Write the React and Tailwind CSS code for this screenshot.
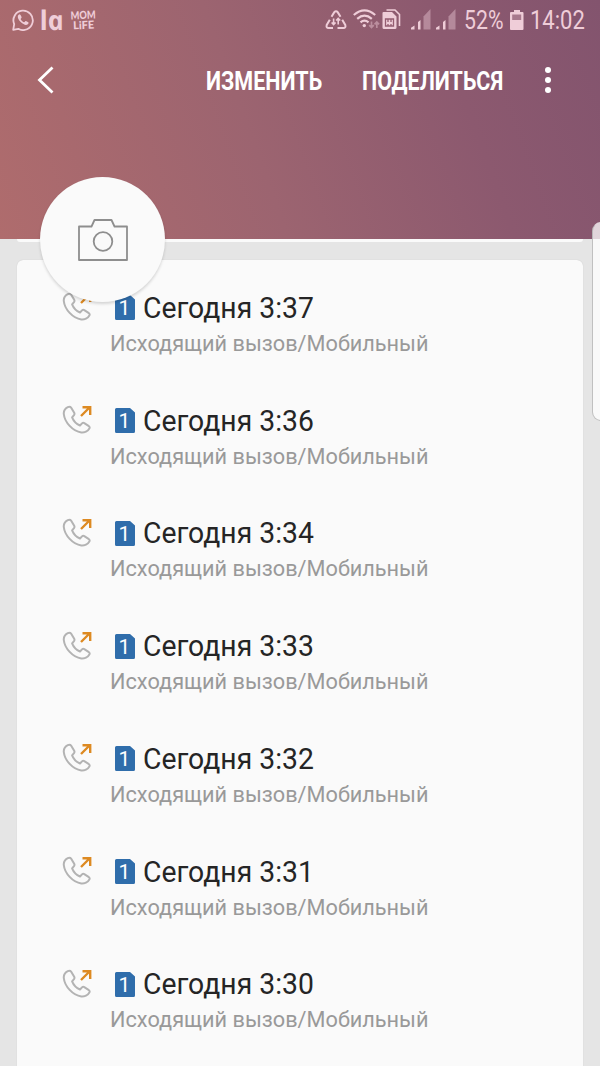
import React from "react";

const calls = [
  { id: 1, time: "Сегодня 3:37" },
  { id: 2, time: "Сегодня 3:36" },
  { id: 3, time: "Сегодня 3:34" },
  { id: 4, time: "Сегодня 3:33" },
  { id: 5, time: "Сегодня 3:32" },
  { id: 6, time: "Сегодня 3:31" },
  { id: 7, time: "Сегодня 3:30" },
];

function WhatsAppIcon() {
  return (
    <svg width="22" height="22" viewBox="0 0 22 22" fill="none" className="shrink-0">
      <path d="M1.200 20.800l1-5.600a9.700 9.700 0 1 1 4.100 4.600z" stroke="currentColor" strokeWidth="1.800" strokeLinejoin="round" />
      <path
        d="M7.600 5.300c-.7 0-1.800.9-1.800 2.500 0 1.500 1.100 3.500 2.900 5.200 1.900 1.800 3.900 2.900 5.200 2.900 1.600 0 2.700-1 2.700-2.100 0-.6-2.500-1.900-3-1.800-.5 0-1 1.300-1.500 1.300-1-.1-3.300-2.300-3.500-3.300 0-.5 1-1 1-1.500 0-.5-1-3.100-2-3.200z"
        fill="currentColor"
      />
    </svg>
  );
}

function DataSaverIcon() {
  return (
    <svg width="22" height="20" viewBox="0 0 22 20" fill="none" stroke="currentColor" strokeWidth="2" className="shrink-0">
      <path d="M6.500 6.800L9.300 2.200Q11 .2 12.700 2.200L15.500 6.800" />
      <path d="M4.800 9.800L1.700 15Q.9 18 3.600 18H8" />
      <path d="M17.200 9.800L20.300 15Q21.100 18 18.400 18H12.500" />
      <path d="M8.600 8.500v6M6.600 12.500l2 2 2-2M13.200 14.500v-6M11.200 10.500l2-2 2 2" strokeWidth="1.600" />
    </svg>
  );
}

function WifiIcon() {
  return (
    <svg width="27" height="22" viewBox="0 0 27 22" fill="none" stroke="currentColor" strokeWidth="2.200" className="shrink-0">
      <path d="M.8 6Q11.500-3.200 22.200 6M4.200 9.800Q11.500 3.500 18.800 9.800M7.500 13.400Q11.500 10 15.500 13.400" />
      <circle cx="11.300" cy="16.600" r="1.700" fill="currentColor" stroke="none" />
      <path d="M18.500 12.500v6M16.200 16.200l2.300 2.300 2.300-2.300M23.800 19v-6M21.500 15.300l2.300-2.300 2.300 2.300" strokeWidth="1.700" opacity=".45" />
    </svg>
  );
}

function SimCardsIcon() {
  return (
    <svg width="19" height="21" viewBox="0 0 19 21" fill="none" className="shrink-0">
      <path d="M4.500 1h8.500l4.500 4.500V17" stroke="currentColor" strokeWidth="1.600" />
      <path d="M1.500 3H10l4.500 4.500V18.500a1.500 1.500 0 0 1-1.500 1.500H2A1.500 1.500 0 0 1 .5 18.500V4a1 1 0 0 1 1-1z" fill="currentColor" />
      <path d="M3.500 10h8v7h-8zM6 10v3M9 10v3M6 15v2M9 15v2" stroke="#945c70" strokeWidth="1.300" />
    </svg>
  );
}

function SignalIcon() {
  return (
    <svg width="20" height="21" viewBox="0 0 20 21" fill="currentColor" className="shrink-0">
      <path d="M0 20.500v-1.700l3.500-2.300v4zM7 20.500v-7.500L9.500 11v9.500z" />
      <path d="M12.500 20.500V7.500L19.500 0v20.500z" opacity=".42" />
    </svg>
  );
}

function BatteryIcon() {
  return (
    <svg width="14" height="20" viewBox="0 0 14 20" fill="currentColor" className="shrink-0">
      <path d="M4 0h6v2h2.500a1 1 0 0 1 1 1v16a1 1 0 0 1-1 1h-11.500a1 1 0 0 1-1-1V3a1 1 0 0 1 1-1h3z" />
      <path d="M2.200 4.500h9v5.500h-9z" fill="#a8798d" />
    </svg>
  );
}

function StatusBar() {
  return (
    <div className="flex h-10 text-[#efcdd8]">
      <div className="flex pl-3 pt-[9px]">
        <WhatsAppIcon />
        <span className="ml-[8px] -mt-[3px] block h-7 w-[23px]">
          {/* the italic cut has the round one-storey "a"; skewed back upright */}
          <span className="block w-max origin-bottom-left skew-x-[12deg] font-['Open_Sans',sans-serif] text-[27px] leading-7 font-bold italic">
            la
          </span>
        </span>
        <div className="ml-[6px] mt-px w-6 -rotate-2 font-[Lato,sans-serif] text-[11px] leading-[10px] font-black">
          <div className="w-max origin-left scale-x-[0.84]">MOM</div>
          <div className="ml-[2px] w-max">LiFE</div>
        </div>
      </div>
      <div className="ml-auto flex pr-[15px] pt-[9px]">
        <div className="mt-[1px] -ml-[2px]">
          <DataSaverIcon />
        </div>
        <div className="ml-[6px]">
          <WifiIcon />
        </div>
        <div className="ml-[2px]">
          <SimCardsIcon />
        </div>
        <div className="ml-[10px] flex gap-[5px]">
          <SignalIcon />
          <SignalIcon />
        </div>
        <div className="ml-[8px] w-[39px] text-[25px] leading-6">
          <span className="block w-max origin-left scale-x-[0.85]">52%</span>
        </div>
        <div className="ml-[7px] mt-[1px]">
          <BatteryIcon />
        </div>
        <div className="ml-[6px] w-[55px] text-[25px] leading-6">
          <span className="block w-max origin-left scale-x-[0.88]">14:02</span>
        </div>
      </div>
    </div>
  );
}

function Toolbar() {
  return (
    <div className="flex h-20 items-center text-[25px] leading-8 font-bold text-white">
      <button className="ml-[37px]">
        <svg width="18" height="28" viewBox="0 0 18 28" fill="none" stroke="currentColor" strokeWidth="2.800">
          <path d="M15.500 1.500L2.500 14l13 12.500" />
        </svg>
      </button>
      <button className="ml-[151px] mt-[3px] w-[116px] text-left">
        <span className="block w-max origin-left scale-x-[0.86]">ИЗМЕНИТЬ</span>
      </button>
      <button className="ml-[40px] mt-[3px] w-[141px] text-left">
        <span className="block w-max origin-left scale-x-[0.858]">ПОДЕЛИТЬСЯ</span>
      </button>
      <button className="ml-[42px] flex flex-col gap-[4px]">
        <span className="size-[6px] rounded-full bg-white" />
        <span className="size-[6px] rounded-full bg-white" />
        <span className="size-[6px] rounded-full bg-white" />
      </button>
    </div>
  );
}

function OutgoingCallIcon() {
  return (
    <svg width="32" height="30" viewBox="0 0 32 30" fill="none" className="shrink-0">
      <path
        d="M5.800 2.100C3.500 3.300 1.500 5.600 1.800 9c.8 8.300 9 17.300 17.500 18.500 3 .3 6.700-1.400 8.200-4.300.4-.9.200-1.400-.6-2l-4.600-3.100c-.9-.6-1.600-.4-2.300.3l-2 2.100c-3.400-1.500-6.700-5.100-7.900-8.200l1.900-2.200c.6-.8.7-1.400.2-2.300L9.200 2.700c-.8-1.200-1.900-1.300-3.400-.6z"
        stroke="#b3b3b3"
        strokeWidth="2"
        strokeLinejoin="round"
      />
      <path d="M19 11l8.500-8.500M20.500 2.300h7.700v7.700" stroke="#dd8a22" strokeWidth="2.400" />
    </svg>
  );
}

function SimBadge() {
  return (
    <svg width="20" height="25" viewBox="0 0 20 25" className="shrink-0">
      <path d="M1.500 0H15L20 4.500V23.500a1.500 1.500 0 0 1-1.500 1.500H1.500A1.500 1.500 0 0 1 0 23.500V1.500A1.500 1.500 0 0 1 1.500 0z" fill="#2f6dab" />
      <text x="9.500" y="19.500" textAnchor="middle" fontSize="21" fill="#fff">
        1
      </text>
    </svg>
  );
}

function CallRow({ call }) {
  return (
    <div className="flex h-[112.750px] pl-[45px]">
      <div className="mt-[14.500px] h-[30px]">
        <OutgoingCallIcon />
      </div>
      <div className="ml-[16px]">
        <div className="mt-[13px] flex h-[34px] pl-[5px]">
          <div className="mt-[4.500px]">
            <SimBadge />
          </div>
          <div className="ml-[8.400px] w-max origin-left scale-x-[0.977] whitespace-nowrap text-[29px] leading-[34px] text-[#252525]">
            {call.time}
          </div>
        </div>
        <div className="mt-[5px] w-max origin-left scale-x-[0.987] whitespace-nowrap text-[22px] leading-7 text-[#999]">
          Исходящий вызов/Мобильный
        </div>
      </div>
    </div>
  );
}

export default function App() {
  return (
    <div className="relative h-[1066px] w-[600px] overflow-hidden bg-[#e5e5e5] font-[Roboto,sans-serif]">
      <header className="h-[239px] bg-[linear-gradient(70deg,#af6c6d_0%,#9c6470_42%,#8c596f_75%,#83546e_100%)]">
        <StatusBar />
        <Toolbar />
      </header>

      {/* bottom edge of the card scrolled under the header */}
      <div className="mx-[17px] h-[3px] rounded-b-[5px] bg-[#fafafa]" />

      <main className="mx-[17px] mt-[18px] h-[840px] rounded-t-[6px] bg-[#fafafa] pt-[17.900px] shadow-[0_0_1px_rgba(0,0,0,0.18)]">
        {calls.map((call) => (
          <CallRow key={call.id} call={call} />
        ))}
      </main>

      <button className="absolute left-[40px] top-[177px] flex size-[125px] items-center justify-center rounded-full bg-[#fafafa] shadow-[0_2px_3px_rgba(0,0,0,0.15)]">
        <svg width="52" height="44" viewBox="0 0 52 44" fill="none" stroke="#8e8e8e" strokeWidth="1.800" strokeLinejoin="round">
          <path d="M2 8.500h12.500L17.500 2h17l3 6.500H50V42H2z" />
          <circle cx="26" cy="23.500" r="9.300" />
        </svg>
      </button>

      {/* edge panel handle */}
      <div className="absolute left-[592px] top-[222px] h-[199px] w-5 rounded-[9px] border border-[#a9a9a9]/70 border-t-transparent bg-white/75" />
    </div>
  );
}
